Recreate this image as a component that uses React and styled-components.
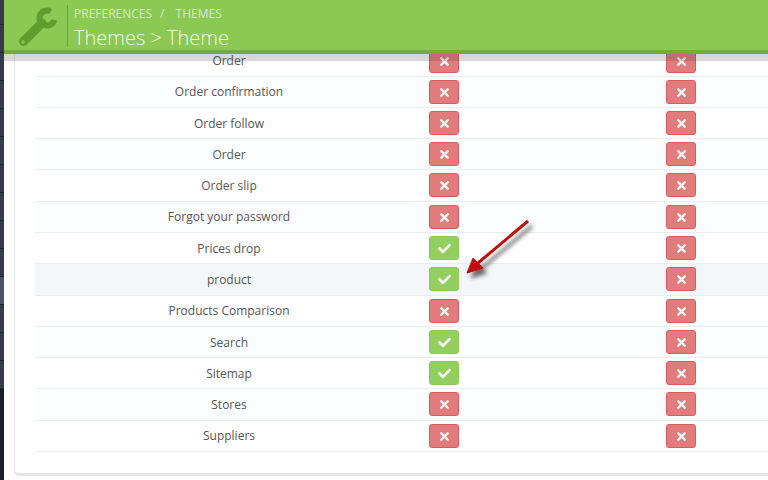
import { createGlobalStyle, styled } from "styled-components";
import { FaCheck, FaTimes } from "react-icons/fa";

const GlobalStyle = createGlobalStyle`
  html, body {
    margin: 0;
    height: 100%;
    overflow: hidden;
    background-color: #fff;
    font-family: "Open Sans", "Liberation Sans", sans-serif;
  }
`;

const Page = styled.div`
  position: relative;
  display: flex;
  width: 768px;
  height: 480px;
  overflow: hidden;
`;

const Sidebar = styled.nav`
  flex: 0 0 4px;
  display: flex;
  flex-direction: column;
  background-color: #1a1d24;
`;

const SideItem = styled.div`
  flex: 0 0 28px;
  box-sizing: border-box;
  margin-top: ${(p) => (p.$first ? "-3px" : "0")};
  background-color: ${(p) => (p.$active ? "#4a5568" : "#363a4b")};
  border-bottom: 1px solid #23262f;
`;

const Content = styled.main`
  flex: 1;
  min-width: 0;
  padding: 0 0 0 10px;
`;

const Panel = styled.section`
  box-sizing: border-box;
  width: 800px;
  height: 474px;
  padding: 46px 0 0 20px;
  background-color: #fff;
  border: 1px solid #e6e6e6;
  border-top: none;
  border-radius: 5px;
  box-shadow: 0 2px 0 #e6e6e6;
`;

const Row = styled.div`
  display: grid;
  grid-template-columns: 388px 42px 432px;
  align-items: start;
  height: ${(p) => p.$height}px;
  box-sizing: border-box;
  border-bottom: 1px solid #eaedef;
  background-color: ${(p) =>
    p.$hover ? "#f4f7fa" : p.$odd ? "#fcfdfe" : "#fff"};
  color: #555;
  font-size: 12px;
  text-align: center;
`;

const RowName = styled.span`
  line-height: 30px;
  margin-top: ${(p) => (p.$lift ? "0" : "1px")};
`;

const Flag = styled.span`
  justify-self: center;
  display: flex;
  align-items: center;
  justify-content: center;
  width: 30px;
  height: 24px;
  margin-top: 3px;
  box-sizing: border-box;
  border-radius: 3px;
  border: 1px solid ${(p) => (p.$on ? "#8bc954" : "#dc5a5a")};
  background-color: ${(p) => (p.$on ? "#93cf5f" : "#e27c7c")};
  color: #f4f4f2;
  font-size: 13px;
`;

const Header = styled.header`
  position: absolute;
  top: 0;
  left: 4px;
  right: 0;
  height: 50px;
  display: flex;
  align-items: flex-start;
  background-color: #8bc954;
  border-bottom: 4px solid #72ac39;
  box-shadow: 0 7px 0 rgba(60, 60, 60, 0.2);
`;

const HeaderIcon = styled.svg`
  flex: 0 0 42px;
  margin: 6px 8px 0 13px;
`;

const HeaderText = styled.div`
  margin-top: 5px;
  height: 42px;
  padding-left: 6px;
  border-left: 1px solid #6ba334;
`;

const Breadcrumb = styled.div`
  display: flex;
  gap: 8px;
  height: 18px;
  line-height: 18px;
  font-size: 12px;
  text-transform: uppercase;
  color: #d5ecbf;
`;

const Title = styled.h1`
  margin: 0;
  font-size: 20px;
  line-height: 30px;
  font-weight: 300;
  color: #f4fbe9;
`;

const Arrow = styled.svg`
  position: absolute;
  left: 460px;
  top: 215px;
  overflow: visible;
`;

const sideItems = Array.from({ length: 14 }, (_, i) => i);

const rows = [
  { name: "Order", height: 31, lift: true },
  { name: "Order confirmation", height: 31, lift: true },
  { name: "Order follow", height: 31 },
  { name: "Order", height: 31 },
  { name: "Order slip", height: 32 },
  { name: "Forgot your password", height: 31, lift: true },
  { name: "Prices drop", height: 31, on: true },
  { name: "product", height: 32, on: true, hover: true },
  { name: "Products Comparison", height: 31, lift: true },
  { name: "Search", height: 31, on: true },
  { name: "Sitemap", height: 31, on: true },
  { name: "Stores", height: 32 },
  { name: "Suppliers", height: 31, lift: true },
];

function StatusFlag({ on }) {
  return <Flag $on={on}>{on ? <FaCheck /> : <FaTimes />}</Flag>;
}

function WrenchIcon() {
  return (
    <HeaderIcon width="42" height="42" viewBox="0 0 42 42">
      <g fill="none" stroke="#5f9e2d">
        <path d="M6.5 35.5 L25 17" strokeWidth="9" strokeLinecap="round" />
        <path d="M33.75 5.5 A7.5 7.5 0 1 0 37.24 13.94" strokeWidth="6" />
      </g>
      <circle cx="6" cy="36" r="1.7" fill="#8bc954" />
    </HeaderIcon>
  );
}

function App() {
  return (
    <Page>
      <GlobalStyle />
      <Sidebar>
        {sideItems.map((i) => (
          <SideItem key={i} $first={i === 0} $active={i === 10} />
        ))}
      </Sidebar>

      <Content>
        <Panel>
          {rows.map((row, i) => (
            <Row
              key={i}
              $height={row.height}
              $odd={i % 2 === 1}
              $hover={row.hover}
            >
              <RowName $lift={row.lift}>{row.name}</RowName>
              <StatusFlag on={row.on} />
              <StatusFlag />
            </Row>
          ))}
        </Panel>
      </Content>

      <Header>
        <WrenchIcon />
        <HeaderText>
          <Breadcrumb>
            <span>Preferences</span>
            <span>/</span>
            <span>&nbsp;Themes</span>
          </Breadcrumb>
          <Title>Themes &gt; Theme</Title>
        </HeaderText>
      </Header>

      <Arrow width="80" height="70" viewBox="0 0 80 70">
        <defs>
          <filter id="arrowShadow" x="-30%" y="-30%" width="170%" height="170%">
            <feGaussianBlur stdDeviation="2" />
          </filter>
        </defs>
        <g fill="#444" stroke="#444" filter="url(#arrowShadow)" opacity="0.8" transform="translate(4 5)">
          <path d="M68 6 L18 48" strokeWidth="3" fill="none" />
          <path d="M7 58 L13 43 L23 53 Z" />
        </g>
        <g fill="#c00d0d" stroke="#c00d0d">
          <path d="M68 6 L18 48" strokeWidth="3" fill="none" />
          <path d="M7 58 L13 43 L23 53 Z" strokeWidth="1" />
        </g>
      </Arrow>
    </Page>
  );
}

export default App;
